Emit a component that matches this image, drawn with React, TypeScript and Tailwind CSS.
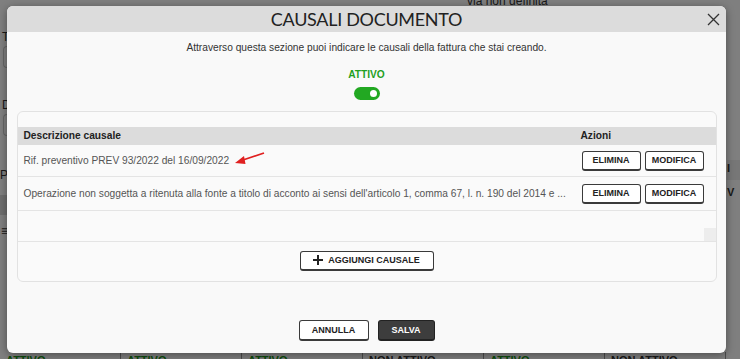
import React from 'react';

// ==================== SMALL PIECES ====================
const btn =
  'h-[20px] rounded-[3px] border border-[#3a3a3a] border-b-2 bg-white text-[9px] font-bold uppercase text-[#222] leading-none flex items-center justify-center';

const RowActions = () => (
  <div className="flex gap-[4px]">
    <button className={`${btn} w-[59px]`}>Elimina</button>
    <button className={`${btn} w-[59px]`}>Modifica</button>
  </div>
);

const BackgroundPage = () => (
  <div className="absolute inset-0 bg-white text-[11px] text-[#333]">
    <div className="absolute left-[467px] top-[-8px] text-[12px]">via non definita</div>
    <div className="absolute left-[2px] top-[28px] text-[12px]">T</div>
    <div className="absolute left-[3px] top-[46px] h-[22px] w-[4px] rounded-l border border-r-0 border-[#ccc]" />
    <div className="absolute left-[2px] top-[96px] text-[12px]">D</div>
    <div className="absolute left-[3px] top-[114px] h-[22px] w-[4px] rounded-l border border-r-0 border-[#ccc]" />
    <div className="absolute left-[0px] top-[166px] text-[12px]">P</div>
    <div className="absolute left-0 top-[195px] h-[20px] w-[7px] bg-[#ddd]" />
    <div className="absolute left-[1px] top-[222px] text-[12px]">≡</div>
    <div className="absolute left-[727px] top-[160px] h-[20px] w-[13px] bg-[#eee] font-bold">I</div>
    <div className="absolute left-[727px] top-[184px] h-[22px] w-[13px] font-bold">V</div>
    <div className="absolute bottom-[-9px] left-0 right-0 flex h-[16px] text-[11px] font-bold">
      {['ATTIVO', 'ATTIVO', 'ATTIVO', 'NON ATTIVO', 'ATTIVO', 'NON ATTIVO'].map((t, i) => (
        <div
          key={i}
          className={`w-[121px] border-r border-[#999] pl-[6px] leading-[16px] ${t === 'ATTIVO' ? 'text-[#1a9a1a]' : 'text-[#333]'}`}
        >
          {t}
        </div>
      ))}
    </div>
  </div>
);

// ==================== MODAL ====================
export default function App() {
  return (
    <div className="relative h-[359px] w-[740px] overflow-hidden" style={{ fontFamily: '"Liberation Sans", Arial, sans-serif' }}>
      <BackgroundPage />
      <div className="absolute inset-0 bg-black/50" />

      <div className="absolute left-[7px] top-[6px] flex h-[347px] w-[719px] flex-col overflow-hidden rounded-[6px] bg-[#f9f9f9] shadow-[0_2px_8px_rgba(0,0,0,0.4)]">
        {/* Header */}
        <div className="relative flex h-[26px] items-center justify-center bg-[#dcdcdc]">
          <h2 className="text-[18px] leading-none tracking-[-0.3px] text-[#222]" style={{ fontFamily: 'Lato, sans-serif' }}>
            CAUSALI DOCUMENTO
          </h2>
          <svg className="absolute right-[6px] top-[7px]" width="13" height="13" viewBox="0 0 13 13">
            <path d="M1 1 L12 12 M12 1 L1 12" stroke="#333" strokeWidth="1.3" />
          </svg>
        </div>

        {/* Body */}
        <div className="flex flex-1 flex-col items-center pt-[9px]">
          <p className="text-[10.2px] leading-[14px] text-[#333]">
            Attraverso questa sezione puoi indicare le causali della fattura che stai creando.
          </p>
          <div className="mt-[13px] text-[10.2px] font-bold leading-[14px] text-[#1fa01f]">ATTIVO</div>
          <div className="mt-[5px] flex h-[13px] w-[26px] items-center justify-end rounded-full bg-[#22a822] pr-[1px]">
            <div className="h-[11px] w-[11px] rounded-full border-[2px] border-[#22a822] bg-white" />
          </div>

          {/* Causali card */}
          <div className="mt-[11px] flex h-[171px] w-[700px] flex-col rounded-[6px] border border-[#e2e2e2] bg-[#fafafa] pt-[15px]">
            <div className="flex h-[18px] items-center bg-[#dcdcdc] text-[10.2px] font-bold text-[#222]">
              <div className="flex-1 pl-[6px]">Descrizione causale</div>
              <div className="w-[137px] pl-[2px]">Azioni</div>
            </div>
            <div className="relative flex h-[32px] items-center border-b border-[#e4e4e4] text-[10.2px] text-[#555]">
              <div className="flex flex-1 items-center pl-[6px]">
                Rif. preventivo PREV 93/2022 del 16/09/2022
                <svg className="ml-[5px] mt-[-4px]" width="32" height="14" viewBox="0 0 32 14">
                  <path d="M30 2 L6 10" stroke="#e02020" strokeWidth="1.8" />
                  <path d="M1 12 L10 5 L11.5 13 Z" fill="#e02020" />
                </svg>
              </div>
              <div className="w-[137px] pl-[3px]">
                <RowActions />
              </div>
            </div>
            <div className="flex h-[34px] items-center border-b border-[#e4e4e4] text-[10.2px] text-[#555]">
              <div className="min-w-0 flex-1 truncate pl-[6px] pr-[10px]">
                Operazione non soggetta a ritenuta alla fonte a titolo di acconto ai sensi dell'articolo 1, comma 67, l. n. 190 del 2014 e ...
              </div>
              <div className="w-[137px] pl-[3px]">
                <RowActions />
              </div>
            </div>
            <div className="flex h-[31px] items-end justify-end border-b border-[#e4e4e4]">
              <div className="h-[13px] w-[12px] bg-[#ededed]" />
            </div>
            <div className="flex flex-1 items-center justify-center pb-[2px]">
              <button className={`${btn} w-[134px] gap-[5px]`}>
                <svg width="10" height="10" viewBox="0 0 10 10">
                  <path d="M5 0 V10 M0 5 H10" stroke="#222" strokeWidth="2" />
                </svg>
                Aggiungi causale
              </button>
            </div>
          </div>

          {/* Footer */}
          <div className="mt-[38px] flex gap-[9px]">
            <button className={`${btn} h-[21px] w-[70px]`}>Annulla</button>
            <button className="flex h-[21px] w-[57px] items-center justify-center rounded-[3px] border border-[#222] border-b-2 bg-[#3d3d3d] text-[9px] font-bold uppercase leading-none text-white">
              Salva
            </button>
          </div>
        </div>
      </div>
    </div>
  );
}
